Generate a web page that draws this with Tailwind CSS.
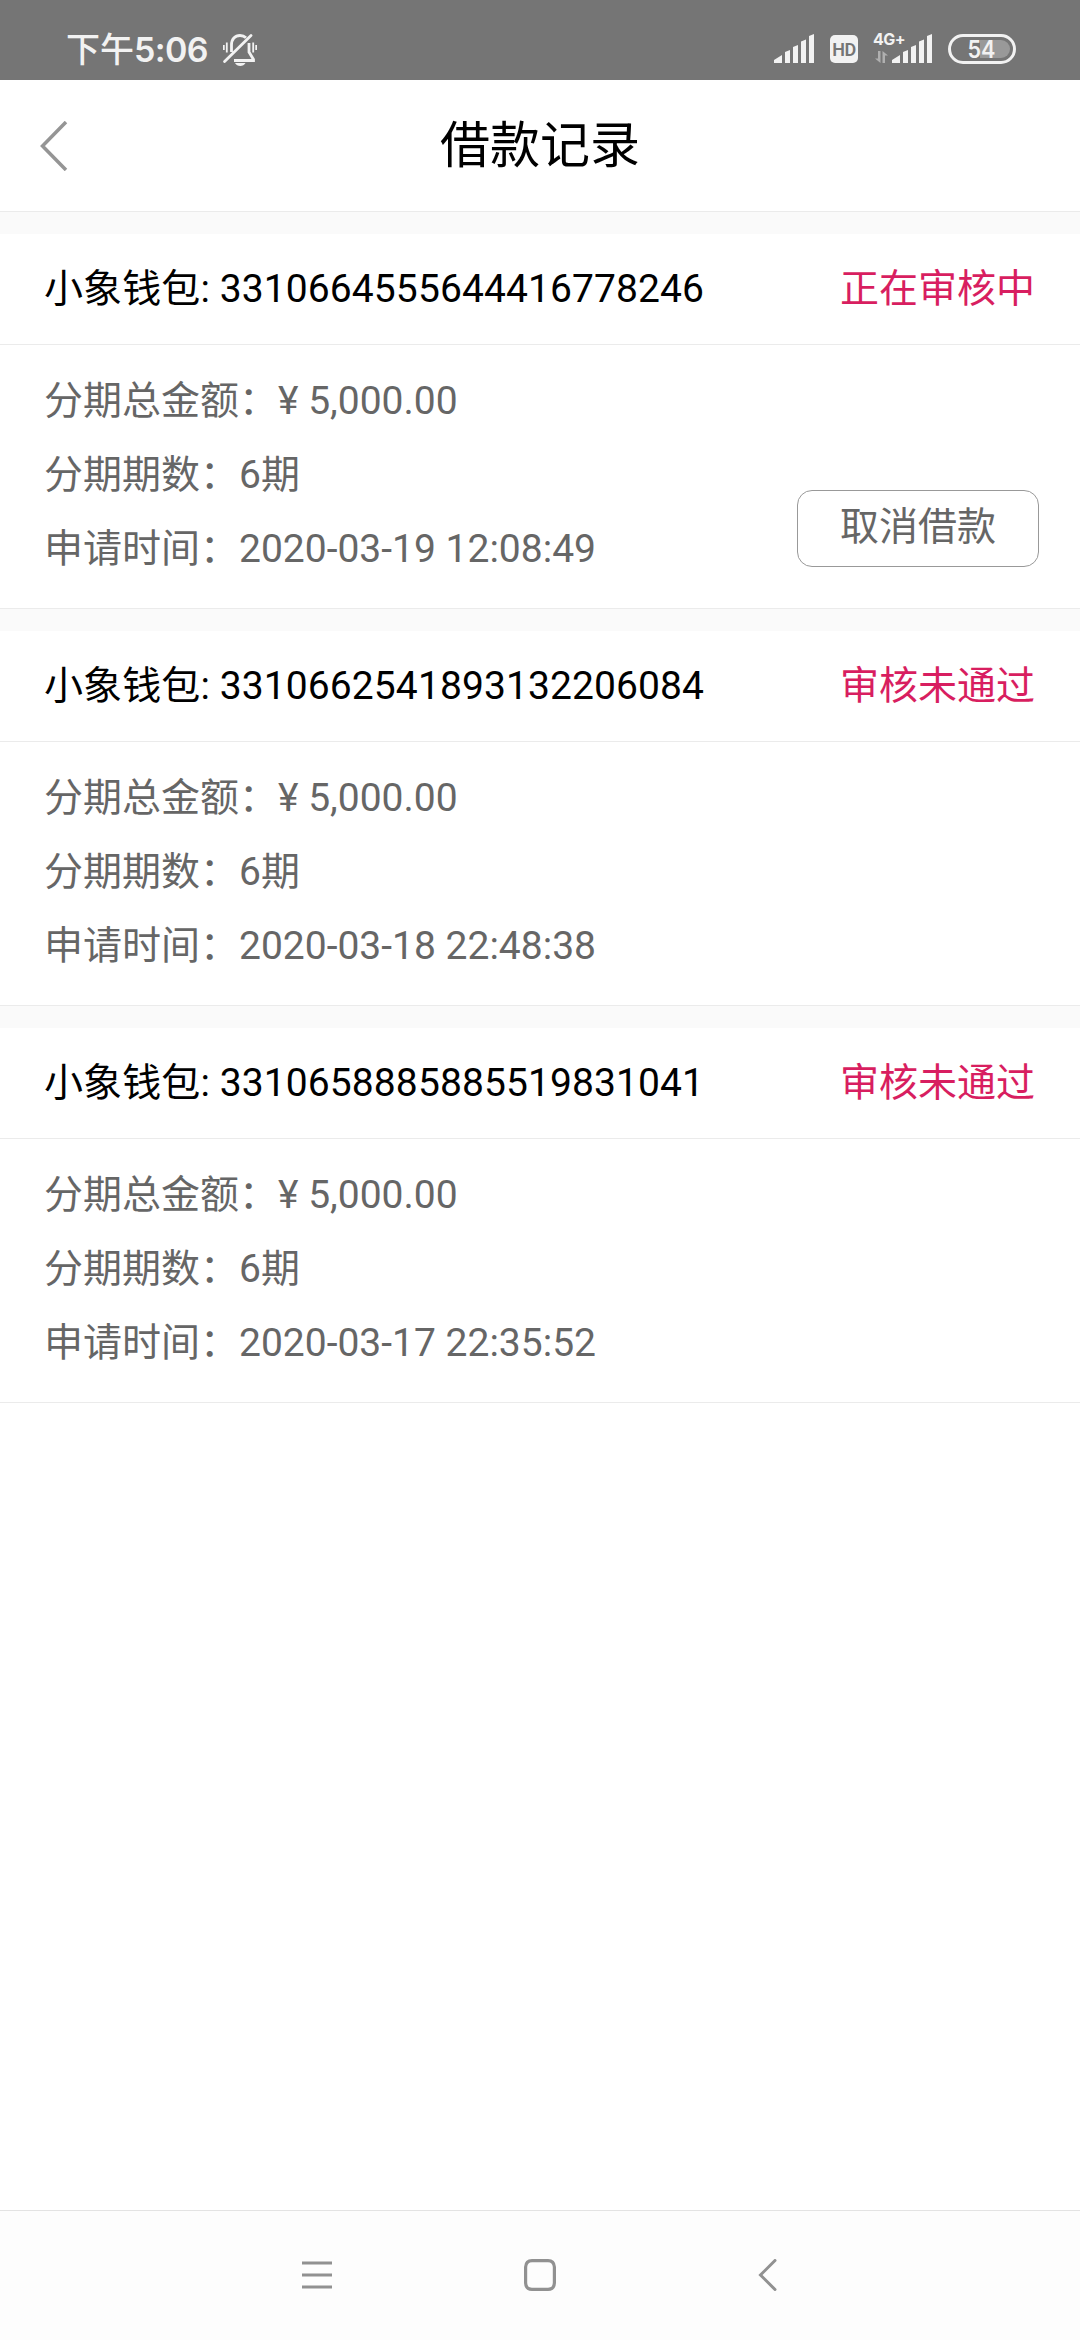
<!DOCTYPE html>
<html lang="zh-CN">

<head>
    <meta charset="UTF-8">
    <meta name="viewport" content="width=device-width, initial-scale=1.0">
    <title>借款记录</title>
    <script src="https://cdn.jsdelivr.net/npm/@tailwindcss/browser@4"></script>
</head>

<body class="flex flex-col w-[1080px] h-[2340px] overflow-hidden bg-white font-[Roboto,'Noto_Sans_CJK_SC',sans-serif]">
    <!-- status bar -->
    <div class="flex shrink-0 justify-between h-20 pl-[66px] pr-16 bg-[#757575] text-[#f2f2f2]">
        <div class="flex pt-[30px] font-[Inter,'Noto_Sans_CJK_SC',sans-serif] font-medium text-[34px] leading-[40px]">
            <span>下午</span><span class="w-[74px] font-semibold tracking-[-0.6px]">5:06</span>
            <svg class="ml-[15px] mt-1 w-[34px] h-8" viewBox="0 0 34 32" fill="none" stroke="currentColor" stroke-width="2.8">
                <path d="M8.500 18V11C8.500 5 12 1.500 17 1.500c2.500 0 4.500.8 6 2.300M26 9v9l4.500 7.500v1H11" />
                <path d="M1.600 27.500 28 1.600" stroke-linecap="round" />
                <path d="M.8 11v5M3.800 8.500v10M30.200 8.500v10M33.200 11v5" stroke-width="1.800" />
                <path d="M12 29h10.500c-1 2-3 3-5.200 3s-4.300-1-5.300-3z" fill="currentColor" stroke="none" />
            </svg>
        </div>
        <div class="flex pt-[30px]">
            <svg class="mt-1 w-10 h-[29px]" viewBox="0 0 40 29" fill="currentColor">
                <path d="M0 29v-3l8-5v8zM11 29V18l5-2v13zM19 29V13l5-2v18zM27 29V7.500l5-2V29zM35 29V2l5-2v29z" />
            </svg>
            <div class="ml-4 mt-[5px] w-7 h-7 rounded-[5px] bg-[#f2f2f2] text-[#757575] text-center text-[18px] leading-[29px] font-semibold font-[Roboto] tracking-[-0.5px]">HD</div>
            <div class="ml-[15px] w-[19px]">
                <div class="mt-[2px] h-[14px] text-[16px] leading-[14px] font-bold font-[Inter] tracking-[-0.6px] whitespace-nowrap">4G+</div>
                <svg class="ml-[2px] mt-[5px] w-[13px] h-3 text-[#b0b0b0]" viewBox="0 0 13 12" fill="currentColor">
                    <path d="M3 0h2.500v12L0 7.500h3zM7.500 0 13 4.500h-3V12H7.500z" />
                </svg>
            </div>
            <svg class="mt-1 w-10 h-[29px]" viewBox="0 0 40 29" fill="currentColor">
                <path d="M0 29v-3l8-5v8zM11 29V18l5-2v13zM19 29V13l5-2v18zM27 29V7.500l5-2V29zM35 29V2l5-2v29z" />
            </svg>
            <svg class="ml-4 mt-1 w-[68px] h-[30px]" viewBox="0 0 68 30">
                <rect x="1.500" y="1.500" width="65" height="27" rx="13.500" fill="none" stroke="#f2f2f2" stroke-width="3" />
                <path d="M32 6h21a9 9 0 0 1 0 18H32z" fill="#999" />
                <text x="33.500" y="23.800" text-anchor="middle" fill="#f2f2f2" font-family="Inter" font-weight="600" font-size="24" textLength="28" lengthAdjust="spacingAndGlyphs">54</text>
            </svg>
        </div>
    </div>

    <!-- title bar -->
    <header class="grid grid-cols-3 items-center shrink-0 h-[132px] pl-10 border-b border-[#ebebeb]">
        <svg class="w-7 h-[50px]" viewBox="0 0 28 50" fill="none" stroke="#959595" stroke-width="3.500">
            <path d="M26 1 2.500 25 26 49" />
        </svg>
        <h1 class="-ml-10 text-center text-[50px] leading-[60px] text-black whitespace-nowrap">借款记录</h1>
    </header>

    <!-- records -->
    <main class="flex-1">
        <section class="border-t-[22px] border-[#fafafa]">
            <div class="flex justify-between items-center h-[111px] pl-11 pr-[45px] border-b border-[#ebebeb] text-[39px] text-black">
                <span class="tracking-[0.1px]">小象钱包: 3310664555644416778246</span>
                <span class="text-[#d81e60]">正在审核中</span>
            </div>
            <div class="flex justify-between items-end h-[264px] pl-11 pr-[41px] pb-[22px] border-b border-[#ebebeb] text-[39px] leading-[74px] text-[#666]">
                <div>
                    <p>分期总金额：¥ 5,000.00</p>
                    <p>分期期数：6期</p>
                    <p>申请时间：2020-03-19 12:08:49</p>
                </div>
                <button class="mb-[19px] w-[242px] h-[77px] border border-[#999] rounded-[15px] leading-[72px]"><span class="block h-[75px]">取消借款</span></button>
            </div>
        </section>
        <section class="border-t-[22px] border-[#fafafa]">
            <div class="flex justify-between items-center h-[111px] pl-11 pr-[45px] border-b border-[#ebebeb] text-[39px] text-black">
                <span class="tracking-[0.1px]">小象钱包: 3310662541893132206084</span>
                <span class="text-[#d81e60]">审核未通过</span>
            </div>
            <div class="flex items-end h-[264px] px-11 pb-[22px] border-b border-[#ebebeb] text-[39px] leading-[74px] text-[#666]">
                <div>
                    <p>分期总金额：¥ 5,000.00</p>
                    <p>分期期数：6期</p>
                    <p>申请时间：2020-03-18 22:48:38</p>
                </div>
            </div>
        </section>
        <section class="border-t-[22px] border-[#fafafa]">
            <div class="flex justify-between items-center h-[111px] pl-11 pr-[45px] border-b border-[#ebebeb] text-[39px] text-black">
                <span class="tracking-[0.1px]">小象钱包: 3310658885885519831041</span>
                <span class="text-[#d81e60]">审核未通过</span>
            </div>
            <div class="flex items-end h-[264px] px-11 pb-[22px] border-b border-[#ebebeb] text-[39px] leading-[74px] text-[#666]">
                <div>
                    <p>分期总金额：¥ 5,000.00</p>
                    <p>分期期数：6期</p>
                    <p>申请时间：2020-03-17 22:35:52</p>
                </div>
            </div>
        </section>
    </main>

    <!-- navigation keys -->
    <nav class="flex shrink-0 items-center justify-between h-[130px] pl-[302px] pr-[303px] pb-[2px] border-t border-[#e3e3e3] bg-[#fdfdfd] text-[#919191]">
        <svg class="w-[30px] h-8" viewBox="0 0 30 32" fill="none" stroke="currentColor" stroke-width="3">
            <path d="M0 4h30M0 16h30M0 28h30" />
        </svg>
        <svg class="-ml-[11px] w-8 h-8" viewBox="0 0 32 32" fill="none" stroke="currentColor" stroke-width="3.200">
            <path d="M8 1.600h16Q30 1.600 30.400 8v16Q30 30.400 24 30.400H8Q2 30.400 1.600 24V8Q2 1.600 8 1.600z" />
        </svg>
        <svg class="w-[19px] h-8" viewBox="0 0 19 32" fill="none" stroke="currentColor" stroke-width="3" stroke-linecap="round">
            <path d="M17 1.500 2.500 16 17 30.500" />
        </svg>
    </nav>
</body>

</html>
